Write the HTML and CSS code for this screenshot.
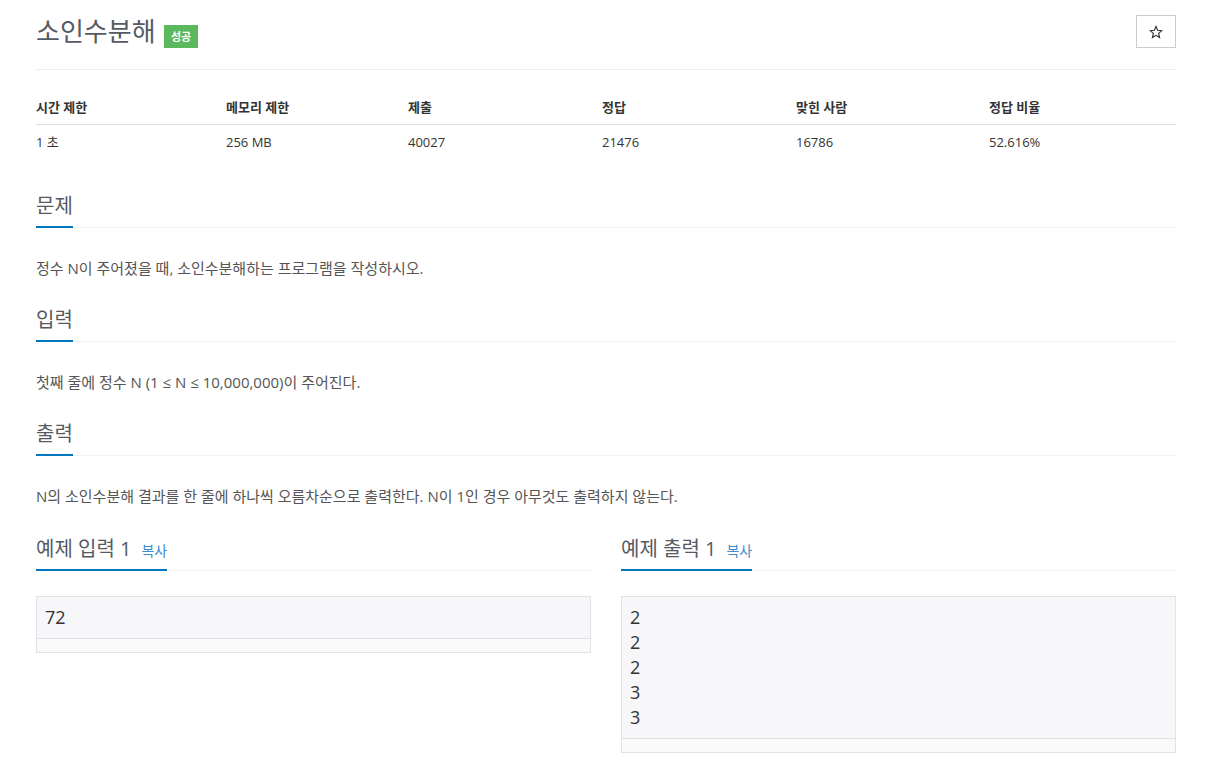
FILE: index.html
```html
<!DOCTYPE html>
<html lang="ko">
<head>
    <meta charset="UTF-8">
    <meta name="viewport" content="width=device-width, initial-scale=1.0">
    <title>소인수분해</title>
    <link rel="stylesheet" href="styles.css">
</head>
<body>
    <div class="container">
        <div class="page-header">
            <h1><span class="problem-title">소인수분해</span> <span class="label-success">성공</span></h1>
            <button class="btn-star" title="즐겨찾기">
                <svg width="14" height="14" viewBox="0 0 24 24"><path d="M12 2.5l2.8 6.6 7.1.6-5.4 4.7 1.6 7-6.1-3.7-6.1 3.7 1.6-7L2.1 9.7l7.1-.6z" fill="none" stroke="#333" stroke-width="2" stroke-linejoin="miter"/></svg>
            </button>
        </div>

        <table class="problem-info">
            <colgroup>
                <col class="c1"><col class="c2"><col class="c3"><col class="c4"><col class="c5"><col class="c6">
            </colgroup>
            <thead>
                <tr>
                    <th>시간 제한</th>
                    <th>메모리 제한</th>
                    <th>제출</th>
                    <th>정답</th>
                    <th>맞힌 사람</th>
                    <th>정답 비율</th>
                </tr>
            </thead>
            <tbody>
                <tr>
                    <td>1 초</td>
                    <td>256 MB</td>
                    <td>40027</td>
                    <td>21476</td>
                    <td>16786</td>
                    <td>52.616%</td>
                </tr>
            </tbody>
        </table>

        <section class="problem-section">
            <div class="headline"><h2>문제</h2></div>
            <p>정수 N이 주어졌을 때, 소인수분해하는 프로그램을 작성하시오.</p>
        </section>

        <section class="problem-section">
            <div class="headline"><h2>입력</h2></div>
            <p>첫째 줄에 정수 N (1 ≤ N ≤ 10,000,000)이 주어진다.</p>
        </section>

        <section class="problem-section">
            <div class="headline"><h2>출력</h2></div>
            <p>N의 소인수분해 결과를 한 줄에 하나씩 오름차순으로 출력한다. N이 1인 경우 아무것도 출력하지 않는다.</p>
        </section>

        <div class="samples">
            <section class="sample">
                <div class="headline"><h2>예제 입력 1<a href="#" class="copy">복사</a></h2></div>
                <div class="sample-box">
                    <pre>72</pre>
                    <div class="scroll-track"></div>
                </div>
            </section>
            <section class="sample">
                <div class="headline"><h2>예제 출력 1<a href="#" class="copy">복사</a></h2></div>
                <div class="sample-box">
                    <pre>2
2
2
3
3</pre>
                    <div class="scroll-track"></div>
                </div>
            </section>
        </div>
    </div>
</body>
</html>
```

FILE: styles.css
```css
* { box-sizing: border-box; }
body {
    margin: 0;
    font-family: "Open Sans", "Noto Sans CJK KR", sans-serif;
    color: #555;
    background: #fff;
}
.container { width: 1140px; margin-left: 36px; }

.page-header {
    display: flex;
    justify-content: space-between;
    align-items: flex-start;
    padding-top: 14px;
    padding-bottom: 21px;
    border-bottom: 1px solid #eee;
}
.page-header h1 {
    margin: 0;
    font-size: 26px;
    line-height: 34px;
    font-weight: 400;
    color: #555a63;
}
.label-success {
    display: inline-block;
    margin-left: 2px;
    padding: 4px 6.5px;
    font-size: 11px;
    line-height: 15px;
    font-weight: 700;
    color: #fff;
    background: #5cb85c;
    vertical-align: 0;
}
.btn-star {
    width: 40px; height: 33px;
    margin-top: 1px;
    border: 1px solid #ccc;
    background: #fff;
    display: flex;
    align-items: center;
    justify-content: center;
    padding: 0;
}

.problem-info {
    width: 100%;
    table-layout: fixed;
    border-collapse: collapse;
    margin-top: 20px;
    margin-bottom: 31px;
    font-size: 13px;
    color: #333;
}
.problem-info .c1 { width: 190px; }
.problem-info .c2 { width: 182px; }
.problem-info .c3 { width: 194px; }
.problem-info .c4 { width: 194px; }
.problem-info .c5 { width: 193px; }
.problem-info th, .problem-info td {
    text-align: left;
    padding: 8px 0;
    line-height: 19px;
}
.problem-info th { padding-bottom: 7px; font-weight: 700; border-bottom: 1px solid #ddd; }

.headline {
    display: flex;
    border-bottom: 1px dotted #e4e9f0;
    margin-bottom: 25px;
}
.headline h2 {
    margin: 0 0 -1px;
    padding-bottom: 5px;
    font-size: 20px;
    line-height: 30px;
    font-weight: 400;
    color: #555a63;
    border-bottom: 2px solid #0076c0;
}
.problem-section p {
    margin: 0 0 22px;
    font-size: 15px;
    line-height: 30px;
    color: #555;
}

.samples {
    display: grid;
    grid-template-columns: 1fr 1fr;
    column-gap: 30px;
    margin-top: 23px;
}
.copy {
    margin-left: 10px;
    font-size: 14px;
    line-height: 1;
    color: #428bca;
    text-decoration: none;
}
.sample-box {
    border: 1px solid #e1e1e8;
    background: #f7f7f9;
}
.sample-box pre {
    margin: 0;
    padding: 8px 9px 8px 8px;
    font-family: "Open Sans", "Noto Sans", sans-serif;
    font-size: 18px;
    line-height: 25px;
    color: #333;
}
.scroll-track {
    height: 14px;
    border-top: 1px solid #e1e1e8;
    background: #fafafa;
}
```
